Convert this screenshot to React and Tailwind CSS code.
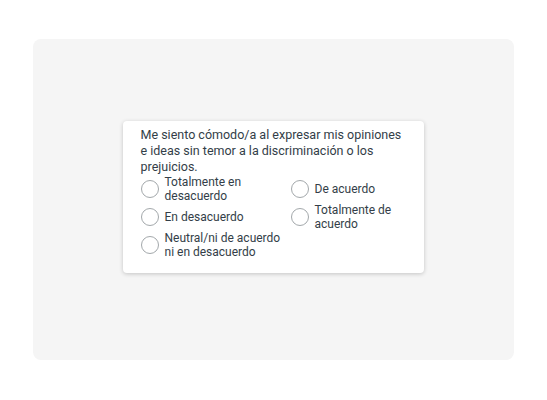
import React from "react";

const Radio = () => (
  <span className="block w-[18px] h-[18px] shrink-0 rounded-full border border-[#a3a8ab] bg-white" />
);

const Option = ({ label }) => (
  <label className="flex items-center gap-[6px] min-h-[28px]">
    <Radio />
    <span className="text-[12px] leading-[14px] text-[#333e48] max-w-[118px]">{label}</span>
  </label>
);

export default function App() {
  return (
    <div className="w-[547px] h-[400px] bg-white pt-[39px] pl-[33px] font-['Roboto',sans-serif]">
      <div className="w-[481px] h-[321px] rounded-[8px] bg-[#f5f5f5] flex items-start justify-center pt-[82px] pr-[1px]">
        <div className="w-[301px] rounded-[4px] bg-white shadow-[0_1px_4px_rgba(0,0,0,0.2)] pl-[18px] pr-[18px] pt-[6px] pb-[14px]">
          <p className="text-[12.5px] leading-[16px] text-[#333e48]">
            Me siento cómodo/a al expresar mis opiniones e ideas sin temor a la discriminación o los prejuicios.
          </p>
          <div className="grid grid-cols-[150px_1fr]">
            <Option label="Totalmente en desacuerdo" />
            <Option label="De acuerdo" />
            <Option label="En desacuerdo" />
            <Option label="Totalmente de acuerdo" />
            <Option label="Neutral/ni de acuerdo ni en desacuerdo" />
          </div>
        </div>
      </div>
    </div>
  );
}
